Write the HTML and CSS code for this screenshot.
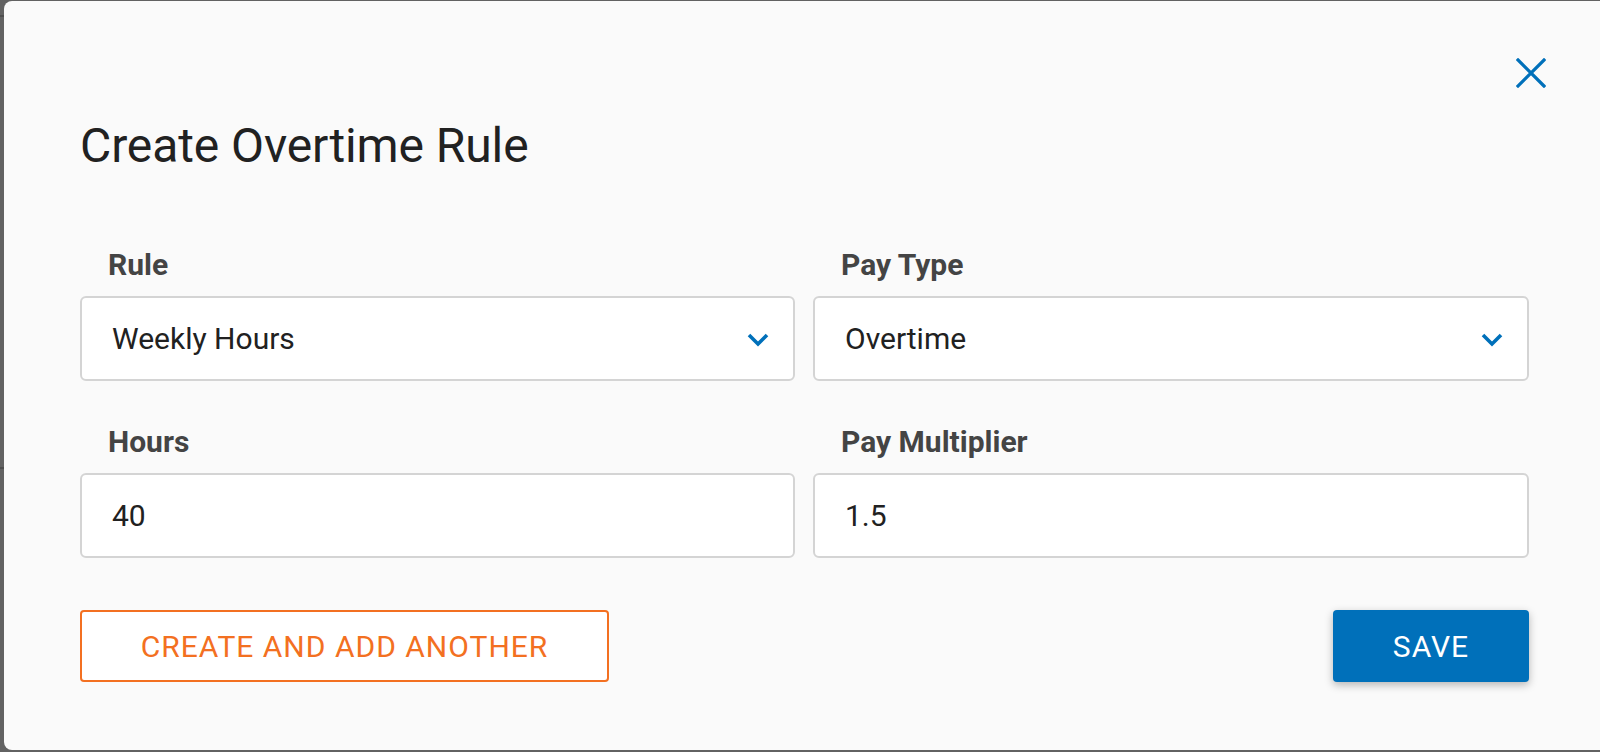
FILE: index.html
```html
<!DOCTYPE html>
<html lang="en">
<head>
<meta charset="utf-8">
<title>Create Overtime Rule</title>
<link rel="stylesheet" href="styles.css">
</head>
<body>
<div class="dialog">
  <div class="close-row">
    <button class="close" aria-label="Close">
      <svg width="30" height="30" viewBox="0 0 30 30"><path d="M2 2 L28 28 M28 2 L2 28" stroke="#0070ba" stroke-width="3.2" stroke-linecap="square" fill="none"/></svg>
    </button>
  </div>
  <h1 class="title">Create Overtime Rule</h1>
  <div class="grid">
    <div class="field">
      <div class="label">Rule</div>
      <div class="box select"><span>Weekly Hours</span>
        <svg class="chev" width="22" height="14" viewBox="0 0 22 14"><polyline points="2,2 11,11 20,2" stroke="#0070ba" stroke-width="3.6" fill="none"/></svg>
      </div>
    </div>
    <div class="field">
      <div class="label">Pay Type</div>
      <div class="box select"><span>Overtime</span>
        <svg class="chev" width="22" height="14" viewBox="0 0 22 14"><polyline points="2,2 11,11 20,2" stroke="#0070ba" stroke-width="3.6" fill="none"/></svg>
      </div>
    </div>
    <div class="field">
      <div class="label">Hours</div>
      <div class="box"><span>40</span></div>
    </div>
    <div class="field">
      <div class="label">Pay Multiplier</div>
      <div class="box"><span>1.5</span></div>
    </div>
  </div>
  <div class="actions">
    <button class="btn outline">CREATE AND ADD ANOTHER</button>
    <button class="btn primary">SAVE</button>
  </div>
</div>
</body>
</html>
```

FILE: styles.css
```css
* { box-sizing: border-box; }
html, body { margin: 0; padding: 0; }
body {
  width: 1600px;
  height: 752px;
  overflow: hidden;
  font-family: Roboto, "Liberation Sans", Arial, sans-serif;
  background: linear-gradient(to bottom, #626262 0 15px, #4e4e4e 15px 17px, #626262 17px 467px, #4e4e4e 467px 469px, #626262 469px);
}
.dialog {
  width: 1596px;
  height: 749px;
  margin: 1px 0 0 4px;
  padding: 0 71px 0 76px;
  background: #fafafa;
  border-radius: 8px 0 0 8px;
}
.close-row {
  display: flex;
  justify-content: flex-end;
  padding-top: 57px;
  margin-right: -17px;
}
.close {
  width: 30px;
  height: 30px;
  padding: 0;
  border: 0;
  background: none;
  display: block;
}
.close svg { display: block; }
.title {
  margin: 30px 0 0 0;
  font-size: 48px;
  line-height: 56px;
  font-weight: 400;
  color: #212121;
  letter-spacing: -0.1px;
}
.grid {
  display: grid;
  grid-template-columns: 715px 716px;
  column-gap: 18px;
  row-gap: 45px;
  margin-top: 75px;
}
.label {
  font-size: 30px;
  line-height: 32px;
  font-weight: 700;
  color: #444444;
  padding-left: 28px;
  margin-bottom: 15px;
}
.box {
  height: 85px;
  background: #ffffff;
  border: 2px solid #d4d4d4;
  border-radius: 6px;
  display: flex;
  align-items: center;
  justify-content: space-between;
  padding: 0 24px 0 30px;
  font-size: 30px;
  color: #212121;
}
.chev { display: block; margin-top: 2px; }
.actions {
  display: flex;
  justify-content: space-between;
  align-items: flex-start;
  margin-top: 52px;
}
.btn {
  height: 72px;
  font-family: Roboto, "Liberation Sans", Arial, sans-serif;
  font-size: 30px;
  letter-spacing: 1px;
  font-weight: 400;
  border-radius: 4px;
  padding: 0;
}
.outline {
  width: 529px;
  background: #ffffff;
  border: 2px solid #f37021;
  color: #f37021;
}
.primary {
  width: 196px;
  background: #0070ba;
  border: 0;
  color: #ffffff;
  box-shadow: 0 3px 8px rgba(0, 0, 0, 0.28);
}
```
